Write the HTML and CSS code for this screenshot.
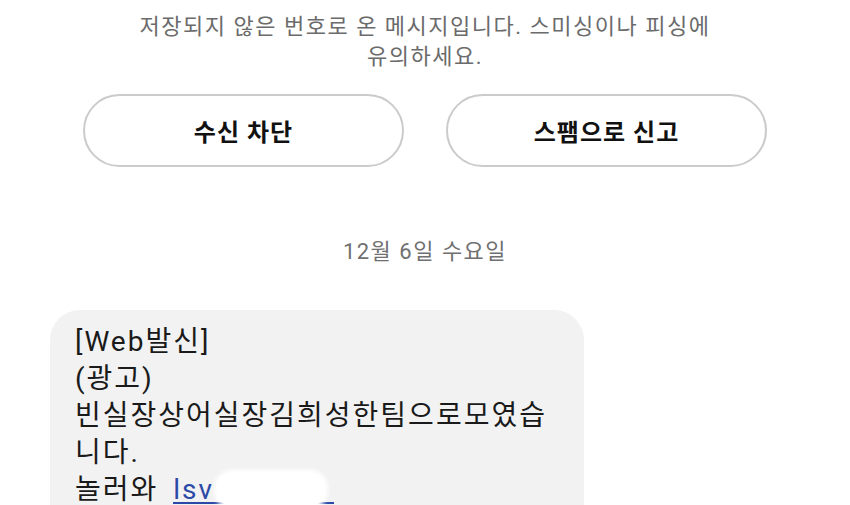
FILE: index.html
```html
<!DOCTYPE html>
<html lang="ko">
<head>
    <meta charset="UTF-8">
    <meta name="viewport" content="width=device-width, initial-scale=1.0">
    <title>메시지</title>
    <link rel="stylesheet" href="styles.css">
</head>
<body>

    <!-- 안내 문구 -->
    <p class="notice">저장되지 않은 번호로 온 메시지입니다. 스미싱이나 피싱에 유의하세요.</p>

    <!-- 차단 / 신고 버튼 -->
    <div class="actions">
        <button class="action-btn">수신 차단</button>
        <button class="action-btn">스팸으로 신고</button>
    </div>

    <!-- 날짜 구분선 -->
    <div class="date-divider">12월 6일 수요일</div>

    <!-- 받은 메시지 -->
    <div class="thread">
        <div class="bubble">
            <p>[Web발신]</p>
            <p>(광고)</p>
            <p>빈실장상어실장김희성한팀으로모였습니다.</p>
            <p>놀러와 <a class="msg-link" href="#">lsv</a><span class="blur-mark"></span></p>
            <p>&nbsp;</p>
        </div>
    </div>

</body>
</html>
```

FILE: styles.css
```css
/* 기본 */
body, html {
    margin: 0;
    padding: 0;
    background: #fff;
    font-family: Roboto, "Noto Sans CJK KR", sans-serif;
    overflow: hidden;
}

/* 안내 문구 */
.notice {
    width: 590px;
    margin: 0 auto;
    padding-top: 12px;
    font-size: 22px;
    line-height: 30px;
    letter-spacing: 1.5px;
    text-align: center;
    color: #6b6b6b;
}

/* 버튼 */
.actions {
    display: flex;
    justify-content: center;
    gap: 42px;
    margin-top: 22px;
}

.action-btn {
    width: 321px;
    height: 73px;
    border: 2px solid #cbcbcb;
    border-radius: 37px;
    background: #fff;
    font-family: Roboto, "Noto Sans CJK KR", sans-serif;
    font-size: 24px;
    font-weight: 700;
    letter-spacing: 1px;
    color: #111;
}

/* 날짜 */
.date-divider {
    margin-top: 70px;
    text-align: center;
    font-size: 22px;
    line-height: 30px;
    letter-spacing: 1.5px;
    color: #707070;
}

/* 말풍선 */
.thread {
    padding: 0 0 0 50px;
    margin-top: 43px;
}

.bubble {
    width: 484px;
    padding: 13px 25px 20px;
    background: #f2f2f2;
    border-radius: 30px;
    font-size: 28px;
    line-height: 37px;
    letter-spacing: 2px;
    color: #1a1a1a;
}

.bubble p {
    margin: 0;
    position: relative;
}

/* 링크: 밑줄은 가린 주소 끝까지 이어짐 */
.msg-link {
    margin-left: 6px;
    padding-right: 120px;
    color: #2b4aa8;
    text-decoration: none;
    background: linear-gradient(#2b4aa8, #2b4aa8) left calc(100% - 2px) / 100% 2px no-repeat;
}

/* 가린 부분 */
.blur-mark {
    position: absolute;
    left: 142px;
    top: 2px;
    width: 108px;
    height: 33px;
    background: #fff;
    border-radius: 15px;
    box-shadow: 0 0 4px 3px #fff;
}
```
